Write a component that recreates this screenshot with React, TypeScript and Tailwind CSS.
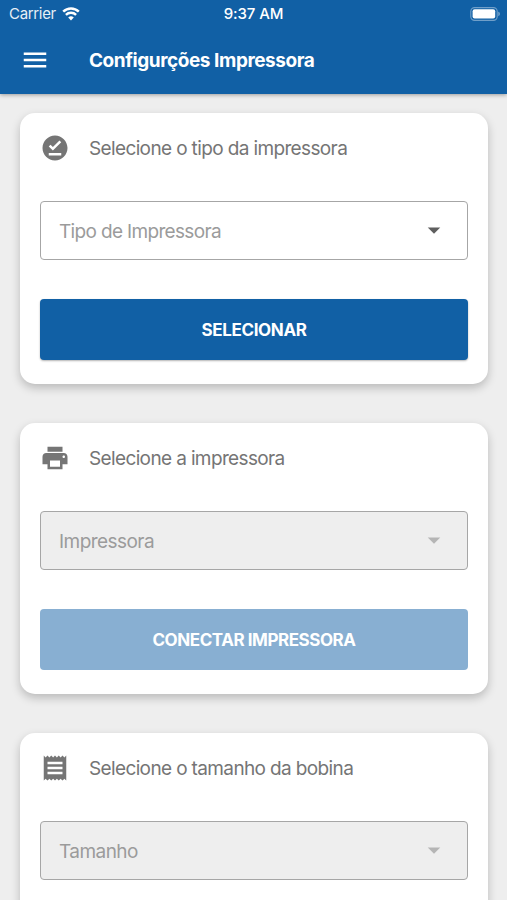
import React from 'react';
import type { IconType } from 'react-icons';
import { MdArrowDropDown, MdMenu, MdOfflinePin, MdPrint, MdReceipt } from 'react-icons/md';

interface SectionProps {
  icon: IconType;
  title: string;
  placeholder: string;
  placeholderClass: string;
  action?: string;
  actionClass?: string;
  disabled?: boolean;
}

function StatusBar() {
  return (
    <div className="grid h-[27px] grid-cols-3 items-center pl-[9px] pr-[6px] text-white">
      <div className="flex items-center gap-[6px]">
        <span className="text-[15px] leading-none tracking-[-0.32px] opacity-90">Carrier</span>
        <svg viewBox="0 0 18 14" className="h-[14px] w-[18px]" fill="none" stroke="currentColor">
          <path d="M1.2 4.7a11.2 11.2 0 0 1 15.6 0" strokeWidth="2.5" />
          <path d="M3.9 7.9a7.2 7.2 0 0 1 10.2 0" strokeWidth="2.4" />
          <path d="M9 13.6 6.2 10.6a4 4 0 0 1 5.6 0z" fill="currentColor" stroke="none" />
        </svg>
      </div>
      <span className="-ml-[3px] text-center text-[15px] font-medium leading-none tracking-[-0.1px]">9:37 AM</span>
      <svg viewBox="0 0 31 14" className="h-[14px] w-[31px] justify-self-end">
        <rect x="0.8" y="0.6" width="26.4" height="12.8" rx="3.8" fill="none" stroke="#fff" strokeOpacity="0.4" strokeWidth="1.1" />
        <rect x="2.6" y="2.2" width="22.6" height="9.2" rx="2" fill="#fff" />
        <path d="M28.4 4.8c1.8.6 1.8 3.8 0 4.4z" fill="#fff" fillOpacity="0.5" />
      </svg>
    </div>
  );
}

function Section({
  icon: Icon,
  title,
  placeholder,
  placeholderClass,
  action,
  actionClass = '',
  disabled = false,
}: SectionProps) {
  return (
    <section className="h-[271.2px] shrink-0 rounded-[15px] bg-white pl-[20px] pr-[19.5px] pt-[19px] shadow-[0_4px_10px_rgba(0,0,0,0.22)]">
      <div className="flex h-[31px] items-center">
        <Icon className="size-[30px] text-[#757575]" />
        <h2 className="ml-[19px] whitespace-nowrap pt-[2px] text-[19px] leading-none tracking-[-0.63px] text-[#757575]">
          {title}
        </h2>
      </div>

      {/* Select field */}
      <div
        className={`mt-[38px] flex h-[59px] items-center justify-between rounded-[4px] border-[1.5px] border-[#a6a6a6] px-[18px] ${
          disabled ? 'bg-[#eeeeee]' : 'bg-white'
        }`}
      >
        <span className={`whitespace-nowrap pt-[2px] text-[19px] leading-none text-[#9b9b9b] ${placeholderClass}`}>
          {placeholder}
        </span>
        <MdArrowDropDown className={`mb-[2px] size-[30px] ${disabled ? 'text-[#b5b5b5]' : 'text-[#5f5f5f]'}`} />
      </div>

      {action && (
        <button
          disabled={disabled}
          className={`mt-[39px] block h-[61px] w-full rounded-[4px] pt-[2px] text-[17px] font-bold leading-none text-white ${
            disabled ? 'bg-[#88afd2]' : 'bg-[#1160a5] shadow-[0_1px_2px_rgba(0,0,0,0.3)]'
          }`}
        >
          <span className={actionClass}>{action}</span>
        </button>
      )}
    </section>
  );
}

export default function App() {
  return (
    <div className="flex h-[900px] w-[507px] flex-col overflow-hidden bg-[#eeeeee] font-['Inter','Liberation_Sans',sans-serif]">
      <header className="relative h-[93.5px] shrink-0 bg-[#1160a5] shadow-[0_1px_4px_rgba(0,0,0,0.35)]">
        <StatusBar />
        <div className="flex h-[66px] items-center pl-[20px]">
          <MdMenu className="size-[30px] text-white" />
          <h1 className="ml-[39px] whitespace-nowrap text-[19px] font-bold leading-none tracking-[-0.44px] text-white">
            Configurções Impressora
          </h1>
        </div>
      </header>

      <main className="flex flex-col gap-[39px] pl-[20px] pr-[19.5px] pt-[19.5px]">
        <Section
          icon={MdOfflinePin}
          title="Selecione o tipo da impressora"
          placeholder="Tipo de Impressora"
          placeholderClass="tracking-[-0.66px]"
          action="SELECIONAR"
          actionClass="tracking-[-0.35px]"
        />
        <Section
          icon={MdPrint}
          title="Selecione a impressora"
          placeholder="Impressora"
          placeholderClass="tracking-[-0.55px]"
          action="CONECTAR IMPRESSORA"
          actionClass="tracking-[-0.45px]"
          disabled
        />
        <Section
          icon={MdReceipt}
          title="Selecione o tamanho da bobina"
          placeholder="Tamanho"
          placeholderClass="tracking-[-0.55px]"
          disabled
        />
      </main>
    </div>
  );
}
